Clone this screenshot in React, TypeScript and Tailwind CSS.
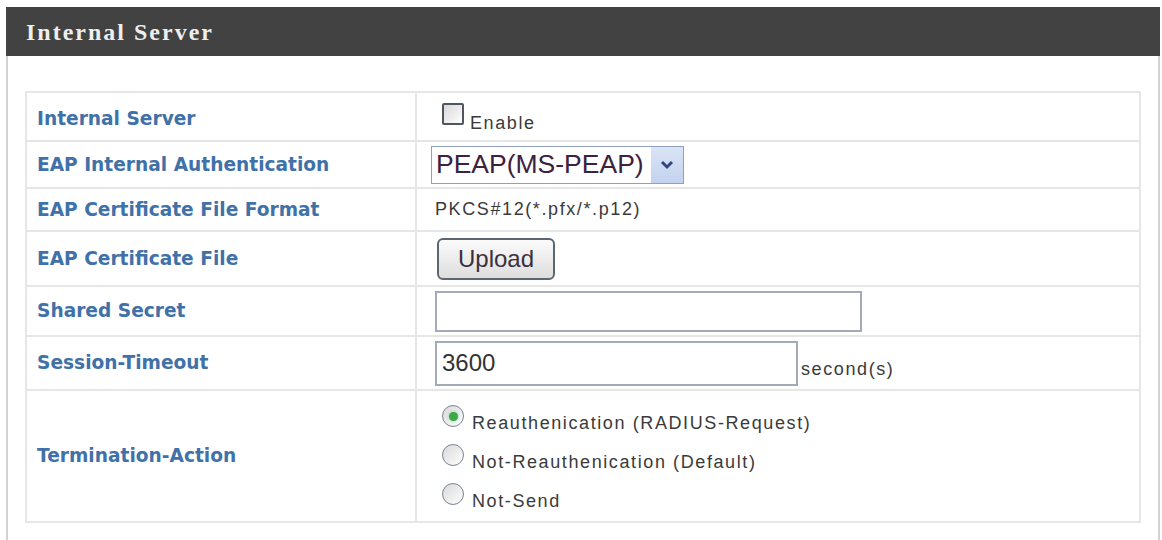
import React from 'react'

const labelCls =
  "pl-[10px] text-[18.6px] font-bold text-[#4071a8] [font-family:'DejaVu_Sans',sans-serif] border-2 border-[#e6e6e6] align-middle"
const valueCls = 'pl-[18px] border-2 border-[#e6e6e6] align-middle'
const smallText = "text-[18px] tracking-[1.6px] text-[#3a3a3a] [font-family:'Liberation_Sans',Arial,sans-serif]"

function Radio({ checked, label }: { checked?: boolean; label: string }) {
  return (
    <div className="flex items-end h-[39px]">
      <span className="ml-[7px] flex items-center justify-center w-[22px] h-[22px] rounded-full border-[1.5px] border-[#7b8594] bg-gradient-to-br from-[#d9d9d9] to-white mb-[5px]">
        {checked && <span className="w-[9px] h-[9px] rounded-full bg-[#3da84a] shadow-[0_0_3px_#7fd08a]" />}
      </span>
      <span className={`${smallText} ml-[8px] leading-none`}>{label}</span>
    </div>
  )
}

export default function App() {
  return (
    <div className="min-h-[540px] bg-white pt-[7px] pl-[6px]">
      <div className="w-[1154px]">
        {/* Header */}
        <div className="h-[49px] bg-[#414241] flex items-center pl-[20px]">
          <h1 className="text-[24px] font-bold tracking-[2px] text-[#eeeeee] [font-family:'Liberation_Serif',serif]">
            Internal Server
          </h1>
        </div>

        {/* Body */}
        <div className="border-x-2 border-[#d2d2d2] px-[17px] pt-[35px] pb-[18px]">
          <table className="w-full border-collapse border-2 border-[#e6e6e6]">
            <tbody>
              <tr className="h-[49px]">
                <td className={`${labelCls} w-[390px] pt-[4px]`}>Internal Server</td>
                <td className={valueCls}>
                  <div className="flex items-end -mt-[6px]">
                    <span className="ml-[7px] w-[22px] h-[22px] border-2 border-[#4f5662] rounded-[2px] bg-gradient-to-br from-[#d8d8d8] to-white" />
                    <span className={`${smallText} ml-[6px] -mb-[7px] leading-none`}>Enable</span>
                  </div>
                </td>
              </tr>
              <tr className="h-[47px]">
                <td className={labelCls}>EAP Internal Authentication</td>
                <td className="pl-[14px] border-2 border-[#e6e6e6] align-middle">
                  <div className="flex items-center w-[253px] h-[38px] border border-[#8fa0bd] bg-white">
                    <span className="flex-1 pl-[4px] text-[26.5px] text-[#3c2140] leading-none [font-family:'Liberation_Sans',Arial,sans-serif]">
                      PEAP(MS-PEAP)
                    </span>
                    <span className="w-[32px] h-full flex items-center justify-center bg-gradient-to-b from-[#dbe4f6] to-[#c3d2ef]">
                      <svg width="16" height="12" viewBox="0 0 16 12">
                        <path d="M3 3 L8 8 L13 3" fill="none" stroke="#34467e" strokeWidth="3" />
                      </svg>
                    </span>
                  </div>
                </td>
              </tr>
              <tr className="h-[43px]">
                <td className={labelCls}>EAP Certificate File Format</td>
                <td className={valueCls}>
                  <span className={smallText}>PKCS#12(*.pfx/*.p12)</span>
                </td>
              </tr>
              <tr className="h-[55px]">
                <td className={labelCls}>EAP Certificate File</td>
                <td className={valueCls}>
                  <button className="ml-[2px] w-[118px] h-[42px] rounded-[6px] border-2 border-[#5b6671] bg-gradient-to-b from-[#fbfbfb] to-[#dedede] text-[24px] text-[#3b3040] [font-family:'Liberation_Sans',Arial,sans-serif]">
                    Upload
                  </button>
                </td>
              </tr>
              <tr className="h-[50px]">
                <td className={labelCls}>Shared Secret</td>
                <td className={valueCls}>
                  <div className="w-[427px] h-[41px] border-2 border-[#a3abb9] bg-white" />
                </td>
              </tr>
              <tr className="h-[54px]">
                <td className={labelCls}>Session-Timeout</td>
                <td className={valueCls}>
                  <div className="flex items-end">
                    <div className="w-[363px] h-[45px] border-2 border-[#a3abb9] bg-white flex items-center pl-[5px] text-[24px] text-[#333] [font-family:'Liberation_Sans',Arial,sans-serif]">
                      3600
                    </div>
                    <span className={`${smallText} ml-[3px] mb-[8px] leading-none`}>second(s)</span>
                  </div>
                </td>
              </tr>
              <tr className="h-[132px]">
                <td className={labelCls}>Termination-Action</td>
                <td className="pl-[18px] border-2 border-[#e6e6e6] align-top pt-[2px]">
                  <Radio checked label="Reauthenication (RADIUS-Request)" />
                  <Radio label="Not-Reauthenication (Default)" />
                  <Radio label="Not-Send" />
                </td>
              </tr>
            </tbody>
          </table>
        </div>
      </div>
    </div>
  )
}
